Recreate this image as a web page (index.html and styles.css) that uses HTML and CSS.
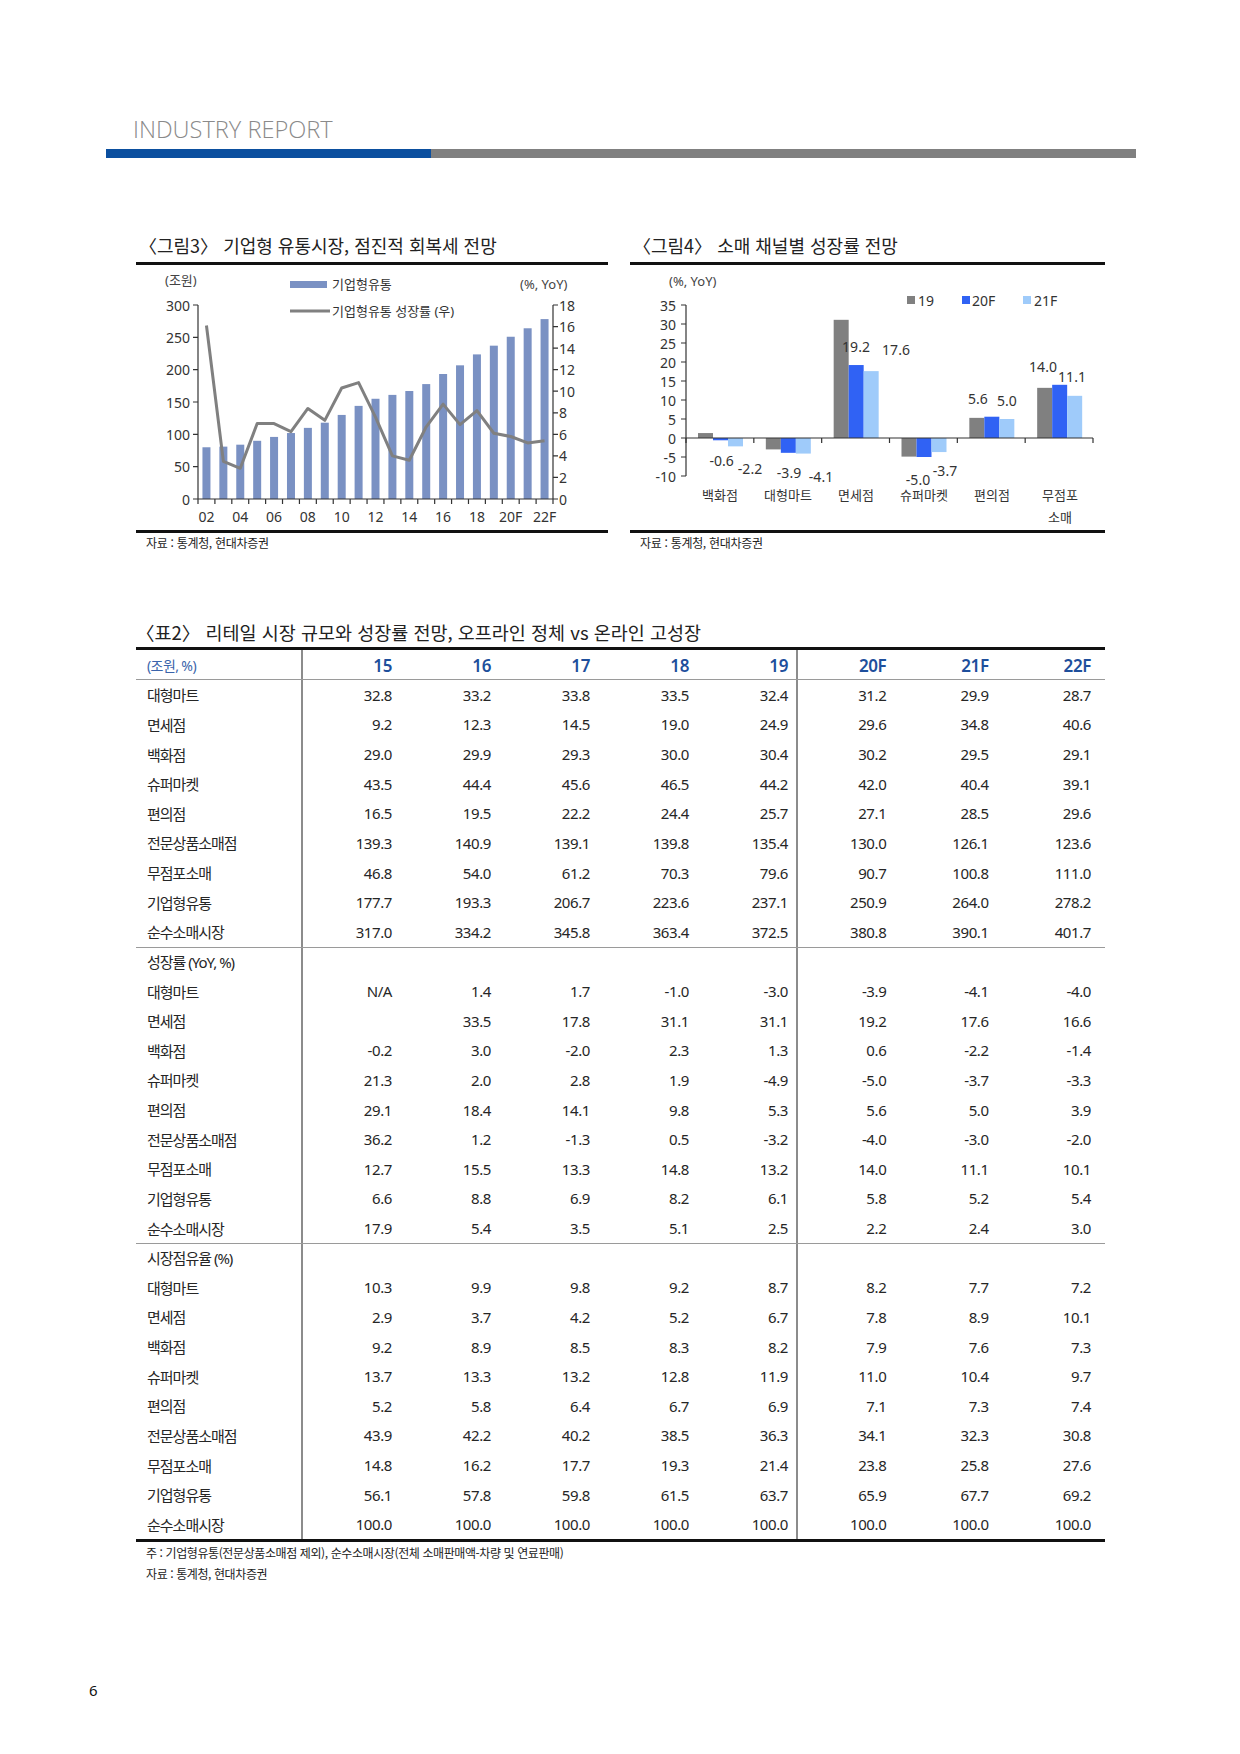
FILE: index.html
```html
<!DOCTYPE html>
<html lang="ko">
<head>
<meta charset="utf-8">
<title>INDUSTRY REPORT</title>
<link rel="stylesheet" href="styles.css">
</head>
<body>
<header class="report-header">
  <div class="report-title">INDUSTRY REPORT</div>
  <div class="report-bar"><span class="bar-blue"></span><span class="bar-gray"></span></div>
</header>

<main class="content">
  <section class="figures">
    <figure class="figure">
      <div class="fig-title">〈그림3〉 기업형 유통시장, 점진적 회복세 전망</div>
      <svg class="chart" width="472" height="265" viewBox="0 0 472 265">
        <text class="unit" x="29" y="15">(조원)</text>
        <rect class="bar1" x="154" y="16" width="37" height="7"/>
        <text class="legend" x="196" y="19">기업형유통</text>
        <line class="line1" x1="154" y1="46" x2="194" y2="46"/>
        <text class="legend" x="196" y="46">기업형유통 성장률 (우)</text>
        <text class="unit" x="384" y="19">(%, YoY)</text>

        <g class="bars1">
          <rect x="66.45" y="182.27" width="8" height="51.73"/>
          <rect x="83.36" y="181.62" width="8" height="52.38"/>
          <rect x="100.26" y="179.68" width="8" height="54.32"/>
          <rect x="117.17" y="175.80" width="8" height="58.20"/>
          <rect x="134.07" y="171.92" width="8" height="62.08"/>
          <rect x="150.98" y="168.04" width="8" height="65.96"/>
          <rect x="167.88" y="162.87" width="8" height="71.13"/>
          <rect x="184.79" y="157.69" width="8" height="76.31"/>
          <rect x="201.69" y="149.93" width="8" height="84.07"/>
          <rect x="218.60" y="140.88" width="8" height="93.12"/>
          <rect x="235.50" y="133.77" width="8" height="100.23"/>
          <rect x="252.41" y="129.89" width="8" height="104.11"/>
          <rect x="269.31" y="126.01" width="8" height="107.99"/>
          <rect x="286.22" y="119.09" width="8" height="114.91"/>
          <rect x="303.12" y="109.00" width="8" height="125.00"/>
          <rect x="320.03" y="100.33" width="8" height="133.67"/>
          <rect x="336.93" y="89.40" width="8" height="144.60"/>
          <rect x="353.84" y="80.67" width="8" height="153.33"/>
          <rect x="370.74" y="71.75" width="8" height="162.25"/>
          <rect x="387.65" y="63.28" width="8" height="170.72"/>
          <rect x="404.55" y="54.10" width="8" height="179.90"/>
        </g>
        <polyline class="line1" points="70.45,60.48 87.36,196.28 104.26,203.28 121.17,158.56 138.07,158.56 154.98,166.64 171.88,143.47 188.79,155.32 205.69,122.99 222.60,117.60 239.50,152.09 256.41,190.89 273.31,195.20 290.22,161.80 307.12,139.16 324.03,159.63 340.93,145.62 357.84,168.26 374.74,171.49 391.65,177.96 408.55,175.80"/>

        <g class="axis">
          <line x1="62" y1="40" x2="62" y2="234"/>
          <line x1="417" y1="40" x2="417" y2="234"/>
          <line x1="62" y1="234" x2="417" y2="234"/>
          <path d="M57 40H62M57 72.33H62M57 104.67H62M57 137H62M57 169.33H62M57 201.67H62M57 234H62"/>
          <path d="M417 40H422M417 61.56H422M417 83.11H422M417 104.67H422M417 126.22H422M417 147.78H422M417 169.33H422M417 190.89H422M417 212.44H422M417 234H422"/>
          <path d="M62 234V239M78.9 234V239M95.81 234V239M112.71 234V239M129.62 234V239M146.52 234V239M163.43 234V239M180.33 234V239M197.24 234V239M214.14 234V239M231.05 234V239M247.95 234V239M264.86 234V239M281.76 234V239M298.67 234V239M315.57 234V239M332.48 234V239M349.38 234V239M366.29 234V239M383.19 234V239M400.1 234V239M417 234V239"/>
        </g>
        <g class="tick-l">
          <text x="54" y="40">300</text>
          <text x="54" y="72.33">250</text>
          <text x="54" y="104.67">200</text>
          <text x="54" y="137">150</text>
          <text x="54" y="169.33">100</text>
          <text x="54" y="201.67">50</text>
          <text x="54" y="234">0</text>
        </g>
        <g class="tick-r">
          <text x="423" y="40">18</text>
          <text x="423" y="61.56">16</text>
          <text x="423" y="83.11">14</text>
          <text x="423" y="104.67">12</text>
          <text x="423" y="126.22">10</text>
          <text x="423" y="147.78">8</text>
          <text x="423" y="169.33">6</text>
          <text x="423" y="190.89">4</text>
          <text x="423" y="212.44">2</text>
          <text x="423" y="234">0</text>
        </g>
        <g class="tick-x">
          <text x="70.45" y="251">02</text>
          <text x="104.26" y="251">04</text>
          <text x="138.07" y="251">06</text>
          <text x="171.88" y="251">08</text>
          <text x="205.69" y="251">10</text>
          <text x="239.5" y="251">12</text>
          <text x="273.31" y="251">14</text>
          <text x="307.12" y="251">16</text>
          <text x="340.93" y="251">18</text>
          <text x="374.74" y="251">20F</text>
          <text x="408.55" y="251">22F</text>
        </g>
      </svg>
      <div class="fig-source">자료 : 통계청, 현대차증권</div>
    </figure>

    <figure class="figure wide">
      <div class="fig-title">〈그림4〉 소매 채널별 성장률 전망</div>
      <svg class="chart" width="475" height="265" viewBox="0 0 475 265">
        <text class="unit" x="39" y="16">(%, YoY)</text>
        <rect class="s19" x="277" y="31" width="8" height="8"/>
        <text class="legend-n" x="288" y="35">19</text>
        <rect class="s20" x="332" y="31" width="8" height="8"/>
        <text class="legend-n" x="342" y="35">20F</text>
        <rect class="s21" x="393" y="31" width="8" height="8"/>
        <text class="legend-n" x="404" y="35">21F</text>

        <g class="s19">
          <rect x="68" y="168.06" width="15" height="4.94"/>
          <rect x="135.83" y="173" width="15" height="11.4"/>
          <rect x="203.67" y="54.82" width="15" height="118.18"/>
          <rect x="271.5" y="173" width="15" height="18.62"/>
          <rect x="339.33" y="152.86" width="15" height="20.14"/>
          <rect x="407.17" y="122.84" width="15" height="50.16"/>
        </g>
        <g class="s20">
          <rect x="83" y="173" width="15" height="2.28"/>
          <rect x="150.83" y="173" width="15" height="14.82"/>
          <rect x="218.67" y="100.04" width="15" height="72.96"/>
          <rect x="286.5" y="173" width="15" height="19"/>
          <rect x="354.33" y="151.72" width="15" height="21.28"/>
          <rect x="422.17" y="119.8" width="15" height="53.2"/>
        </g>
        <g class="s21">
          <rect x="98" y="173" width="15" height="8.36"/>
          <rect x="165.83" y="173" width="15" height="15.58"/>
          <rect x="233.67" y="106.12" width="15" height="66.88"/>
          <rect x="301.5" y="173" width="15" height="14.06"/>
          <rect x="369.33" y="154" width="15" height="19"/>
          <rect x="437.17" y="130.82" width="15" height="42.18"/>
        </g>

        <g class="axis">
          <line x1="56" y1="40" x2="56" y2="211"/>
          <line x1="56" y1="173" x2="463" y2="173"/>
          <path d="M51 40H56M51 59H56M51 78H56M51 97H56M51 116H56M51 135H56M51 154H56M51 173H56M51 192H56M51 211H56"/>
          <path d="M56 173V178M123.83 173V178M191.67 173V178M259.5 173V178M327.33 173V178M395.17 173V178M463 173V178"/>
        </g>
        <g class="tick-l">
          <text x="46" y="40">35</text>
          <text x="46" y="59">30</text>
          <text x="46" y="78">25</text>
          <text x="46" y="97">20</text>
          <text x="46" y="116">15</text>
          <text x="46" y="135">10</text>
          <text x="46" y="154">5</text>
          <text x="46" y="173">0</text>
          <text x="46" y="192">-5</text>
          <text x="46" y="211">-10</text>
        </g>
        <g class="dlabel">
          <text x="91.7" y="195">-0.6</text>
          <text x="120" y="203">-2.2</text>
          <text x="159" y="207">-3.9</text>
          <text x="191" y="211">-4.1</text>
          <text x="315" y="205">-3.7</text>
          <text x="288" y="214">-5.0</text>
          <text x="226" y="81">19.2</text>
          <text x="266" y="84">17.6</text>
          <text x="348" y="133">5.6</text>
          <text x="377" y="135">5.0</text>
          <text x="413" y="101">14.0</text>
          <text x="442" y="111">11.1</text>
        </g>
        <g class="cat">
          <text x="90" y="230">백화점</text>
          <text x="158" y="230">대형마트</text>
          <text x="226" y="230">면세점</text>
          <text x="294" y="230">슈퍼마켓</text>
          <text x="362" y="230">편의점</text>
          <text x="430" y="230">무점포</text>
          <text x="430" y="252">소매</text>
        </g>
      </svg>
      <div class="fig-source">자료 : 통계청, 현대차증권</div>
    </figure>
  </section>

  <section class="table-block">
    <div class="table-title">〈표2〉 리테일 시장 규모와 성장률 전망, 오프라인 정체 vs 온라인 고성장</div>
    <table class="data-table">
      <colgroup>
        <col class="c-label"><col class="c-y"><col class="c-y"><col class="c-y"><col class="c-y"><col class="c-y"><col class="c-f"><col class="c-f"><col class="c-f">
      </colgroup>
      <thead>
        <tr class="head"><td>(조원, %)</td><td>15</td><td>16</td><td>17</td><td>18</td><td>19</td><td>20F</td><td>21F</td><td>22F</td></tr>
      </thead>
      <tbody>
        <tr><td>대형마트</td><td>32.8</td><td>33.2</td><td>33.8</td><td>33.5</td><td>32.4</td><td>31.2</td><td>29.9</td><td>28.7</td></tr>
        <tr><td>면세점</td><td>9.2</td><td>12.3</td><td>14.5</td><td>19.0</td><td>24.9</td><td>29.6</td><td>34.8</td><td>40.6</td></tr>
        <tr><td>백화점</td><td>29.0</td><td>29.9</td><td>29.3</td><td>30.0</td><td>30.4</td><td>30.2</td><td>29.5</td><td>29.1</td></tr>
        <tr><td>슈퍼마켓</td><td>43.5</td><td>44.4</td><td>45.6</td><td>46.5</td><td>44.2</td><td>42.0</td><td>40.4</td><td>39.1</td></tr>
        <tr><td>편의점</td><td>16.5</td><td>19.5</td><td>22.2</td><td>24.4</td><td>25.7</td><td>27.1</td><td>28.5</td><td>29.6</td></tr>
        <tr><td>전문상품소매점</td><td>139.3</td><td>140.9</td><td>139.1</td><td>139.8</td><td>135.4</td><td>130.0</td><td>126.1</td><td>123.6</td></tr>
        <tr><td>무점포소매</td><td>46.8</td><td>54.0</td><td>61.2</td><td>70.3</td><td>79.6</td><td>90.7</td><td>100.8</td><td>111.0</td></tr>
        <tr><td>기업형유통</td><td>177.7</td><td>193.3</td><td>206.7</td><td>223.6</td><td>237.1</td><td>250.9</td><td>264.0</td><td>278.2</td></tr>
        <tr><td>순수소매시장</td><td>317.0</td><td>334.2</td><td>345.8</td><td>363.4</td><td>372.5</td><td>380.8</td><td>390.1</td><td>401.7</td></tr>
        <tr class="sep"><td>성장률 (YoY, %)</td><td></td><td></td><td></td><td></td><td></td><td></td><td></td><td></td></tr>
        <tr><td>대형마트</td><td>N/A</td><td>1.4</td><td>1.7</td><td>-1.0</td><td>-3.0</td><td>-3.9</td><td>-4.1</td><td>-4.0</td></tr>
        <tr><td>면세점</td><td></td><td>33.5</td><td>17.8</td><td>31.1</td><td>31.1</td><td>19.2</td><td>17.6</td><td>16.6</td></tr>
        <tr><td>백화점</td><td>-0.2</td><td>3.0</td><td>-2.0</td><td>2.3</td><td>1.3</td><td>0.6</td><td>-2.2</td><td>-1.4</td></tr>
        <tr><td>슈퍼마켓</td><td>21.3</td><td>2.0</td><td>2.8</td><td>1.9</td><td>-4.9</td><td>-5.0</td><td>-3.7</td><td>-3.3</td></tr>
        <tr><td>편의점</td><td>29.1</td><td>18.4</td><td>14.1</td><td>9.8</td><td>5.3</td><td>5.6</td><td>5.0</td><td>3.9</td></tr>
        <tr><td>전문상품소매점</td><td>36.2</td><td>1.2</td><td>-1.3</td><td>0.5</td><td>-3.2</td><td>-4.0</td><td>-3.0</td><td>-2.0</td></tr>
        <tr><td>무점포소매</td><td>12.7</td><td>15.5</td><td>13.3</td><td>14.8</td><td>13.2</td><td>14.0</td><td>11.1</td><td>10.1</td></tr>
        <tr><td>기업형유통</td><td>6.6</td><td>8.8</td><td>6.9</td><td>8.2</td><td>6.1</td><td>5.8</td><td>5.2</td><td>5.4</td></tr>
        <tr><td>순수소매시장</td><td>17.9</td><td>5.4</td><td>3.5</td><td>5.1</td><td>2.5</td><td>2.2</td><td>2.4</td><td>3.0</td></tr>
        <tr class="sep"><td>시장점유율 (%)</td><td></td><td></td><td></td><td></td><td></td><td></td><td></td><td></td></tr>
        <tr><td>대형마트</td><td>10.3</td><td>9.9</td><td>9.8</td><td>9.2</td><td>8.7</td><td>8.2</td><td>7.7</td><td>7.2</td></tr>
        <tr><td>면세점</td><td>2.9</td><td>3.7</td><td>4.2</td><td>5.2</td><td>6.7</td><td>7.8</td><td>8.9</td><td>10.1</td></tr>
        <tr><td>백화점</td><td>9.2</td><td>8.9</td><td>8.5</td><td>8.3</td><td>8.2</td><td>7.9</td><td>7.6</td><td>7.3</td></tr>
        <tr><td>슈퍼마켓</td><td>13.7</td><td>13.3</td><td>13.2</td><td>12.8</td><td>11.9</td><td>11.0</td><td>10.4</td><td>9.7</td></tr>
        <tr><td>편의점</td><td>5.2</td><td>5.8</td><td>6.4</td><td>6.7</td><td>6.9</td><td>7.1</td><td>7.3</td><td>7.4</td></tr>
        <tr><td>전문상품소매점</td><td>43.9</td><td>42.2</td><td>40.2</td><td>38.5</td><td>36.3</td><td>34.1</td><td>32.3</td><td>30.8</td></tr>
        <tr><td>무점포소매</td><td>14.8</td><td>16.2</td><td>17.7</td><td>19.3</td><td>21.4</td><td>23.8</td><td>25.8</td><td>27.6</td></tr>
        <tr><td>기업형유통</td><td>56.1</td><td>57.8</td><td>59.8</td><td>61.5</td><td>63.7</td><td>65.9</td><td>67.7</td><td>69.2</td></tr>
        <tr><td>순수소매시장</td><td>100.0</td><td>100.0</td><td>100.0</td><td>100.0</td><td>100.0</td><td>100.0</td><td>100.0</td><td>100.0</td></tr>
      </tbody>
    </table>
    <div class="table-notes">
      <p>주 : 기업형유통(전문상품소매점 제외), 순수소매시장(전체 소매판매액-차량 및 연료판매)</p>
      <p>자료 : 통계청, 현대차증권</p>
    </div>
  </section>
</main>

<footer class="page-num">6</footer>
</body>
</html>
```

FILE: styles.css
```css
* { box-sizing: border-box; }

html, body {
  margin: 0;
  padding: 0;
  background: #fff;
}

body {
  width: 1240px;
  min-height: 1754px;
  font-family: "Noto Sans", "Noto Sans CJK KR", sans-serif;
  color: #222;
}

/* ---------- header ---------- */
.report-header {
  margin: 0 104px 0 106px;
  padding-top: 118px;
}

.report-title {
  padding-left: 27px;
  font-family: "Open Sans", "Noto Sans", sans-serif;
  font-weight: 300;
  font-size: 23.6px;
  line-height: 23px;
  color: #8a8a8a;
}

.report-bar {
  display: flex;
  height: 9px;
  margin-top: 8px;
}

.bar-blue {
  width: 325px;
  background: #0b4f9f;
}

.bar-gray {
  flex: 1;
  background: #808080;
}

/* ---------- content ---------- */
.content {
  margin-left: 136px;
  width: 969px;
}

.figures {
  display: flex;
  gap: 22px;
  margin-top: 76px;
}

.figure {
  margin: 0;
  width: 472px;
}

.figure.wide {
  width: 475px;
}

.fig-title {
  height: 31px;
  border-bottom: 3px solid #111;
  padding-left: 3px;
  font-family: "Noto Sans CJK KR", sans-serif;
  font-size: 18px;
  line-height: 22px;
  letter-spacing: 0;
  color: #222;
  white-space: nowrap;
}

.chart {
  display: block;
}

.fig-source {
  border-top: 3px solid #111;
  padding: 2px 0 0 10px;
  font-family: "Noto Sans CJK KR", sans-serif;
  font-size: 12px;
  line-height: 16px;
  letter-spacing: -0.3px;
  color: #222;
}

/* ---------- chart internals ---------- */
.chart text {
  font-family: "Noto Sans", "Noto Sans CJK KR", sans-serif;
  font-size: 14px;
  fill: #333;
  dominant-baseline: central;
}

.chart .unit { font-size: 13px; fill: #444; }
.chart .legend { font-size: 13px; fill: #333; }
.chart .legend-n { font-size: 14px; }

.tick-l text { text-anchor: end; }
.tick-r text { text-anchor: start; }
.tick-x text,
.dlabel text,
.cat text { text-anchor: middle; }

.cat text { font-size: 13px; }

.axis line,
.axis path {
  stroke: #333;
  stroke-width: 1.2;
  fill: none;
}

.bar1,
.bars1 rect { fill: #7a91c3; }

.line1 {
  fill: none;
  stroke: #808080;
  stroke-width: 3;
  stroke-linejoin: round;
}

.s19, .s19 rect { fill: #808080; }
.s20, .s20 rect { fill: #3062f4; }
.s21, .s21 rect { fill: #9fcbfa; }

/* ---------- table ---------- */
.table-title {
  margin-top: 70px;
  height: 26px;
  padding-left: 0;
  font-family: "Noto Sans CJK KR", sans-serif;
  font-size: 18.5px;
  line-height: 22px;
  letter-spacing: 0;
  color: #222;
  white-space: nowrap;
}

.data-table {
  width: 969px;
  table-layout: fixed;
  border-collapse: separate;
  border-spacing: 0;
  border-top: 3px solid #111;
  border-bottom: 3px solid #111;
}

.c-label { width: 167px; }
.c-y { width: 99px; }
.c-f { width: 102.33px; }

.data-table td {
  height: 29.64px;
  padding: 0 10px 0 0;
  text-align: right;
  vertical-align: middle;
  font-size: 15px;
  letter-spacing: -0.4px;
  color: #262626;
  white-space: nowrap;
}

.data-table td:nth-child(n+7) {
  padding-right: 14px;
}

.data-table td:first-child {
  text-align: left;
  padding-left: 11px;
  letter-spacing: -1px;
  box-shadow: inset -2px 0 0 #8c8c8c;
}

.data-table td:nth-child(6) {
  box-shadow: inset -2px 0 0 #8c8c8c;
}

.head td {
  height: 30px;
  font-size: 17px;
  font-weight: 600;
  color: #1e4f9c;
  box-shadow: inset 0 -1px 0 #9a9a9a;
}

.head td:first-child {
  font-size: 14px;
  font-weight: 400;
  color: #3a64ab;
  letter-spacing: -0.6px;
  box-shadow: inset 0 -1px 0 #9a9a9a, inset -2px 0 0 #8c8c8c;
}

.head td:nth-child(6) {
  box-shadow: inset 0 -1px 0 #9a9a9a, inset -2px 0 0 #8c8c8c;
}

.sep td {
  box-shadow: inset 0 1px 0 #9a9a9a;
}

.sep td:first-child,
.sep td:nth-child(6) {
  box-shadow: inset 0 1px 0 #9a9a9a, inset -2px 0 0 #8c8c8c;
}

.table-notes {
  padding-left: 10px;
  font-family: "Noto Sans CJK KR", sans-serif;
  font-size: 12px;
  line-height: 21px;
  letter-spacing: -0.4px;
  color: #222;
}

.table-notes p {
  margin: 0;
}

/* ---------- page number ---------- */
.page-num {
  margin: 96px 0 0 89px;
  font-family: "Noto Sans", sans-serif;
  font-size: 15px;
  line-height: 20px;
  color: #111;
}
```
